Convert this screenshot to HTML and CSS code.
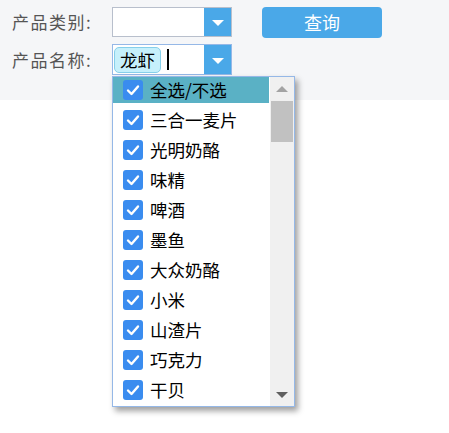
FILE: index.html
```html
<!DOCTYPE html>
<html lang="zh">
<head>
<meta charset="utf-8">
<title>产品查询</title>
<link rel="stylesheet" href="styles.css">
</head>
<body>
<div class="panel">
  <div class="row">
    <label class="label">产品类别:</label>
    <div class="combo">
      <div class="combo-text"></div>
      <div class="combo-arrow"><span class="tri-down"></span></div>
    </div>
    <button class="btn">查询</button>
  </div>
  <div class="row row2">
    <label class="label">产品名称:</label>
    <div class="combo combo-focus">
      <div class="combo-text">
        <span class="tag">龙虾</span>
        <span class="caret"></span>
      </div>
      <div class="combo-arrow"><span class="tri-down"></span></div>
    </div>
  </div>
</div>

<div class="dropdown">
  <ul class="list">
    <li class="item selected"><span class="cb"><svg viewBox="0 0 20 20" width="20" height="20"><polyline points="5,10.5 8.5,14 15,6.5" fill="none" stroke="#fff" stroke-width="2.4" stroke-linecap="round" stroke-linejoin="round"/></svg></span>全选/不选</li>
    <li class="item"><span class="cb"><svg viewBox="0 0 20 20" width="20" height="20"><polyline points="5,10.5 8.5,14 15,6.5" fill="none" stroke="#fff" stroke-width="2.4" stroke-linecap="round" stroke-linejoin="round"/></svg></span>三合一麦片</li>
    <li class="item"><span class="cb"><svg viewBox="0 0 20 20" width="20" height="20"><polyline points="5,10.5 8.5,14 15,6.5" fill="none" stroke="#fff" stroke-width="2.4" stroke-linecap="round" stroke-linejoin="round"/></svg></span>光明奶酪</li>
    <li class="item"><span class="cb"><svg viewBox="0 0 20 20" width="20" height="20"><polyline points="5,10.5 8.5,14 15,6.5" fill="none" stroke="#fff" stroke-width="2.4" stroke-linecap="round" stroke-linejoin="round"/></svg></span>味精</li>
    <li class="item"><span class="cb"><svg viewBox="0 0 20 20" width="20" height="20"><polyline points="5,10.5 8.5,14 15,6.5" fill="none" stroke="#fff" stroke-width="2.4" stroke-linecap="round" stroke-linejoin="round"/></svg></span>啤酒</li>
    <li class="item"><span class="cb"><svg viewBox="0 0 20 20" width="20" height="20"><polyline points="5,10.5 8.5,14 15,6.5" fill="none" stroke="#fff" stroke-width="2.4" stroke-linecap="round" stroke-linejoin="round"/></svg></span>墨鱼</li>
    <li class="item"><span class="cb"><svg viewBox="0 0 20 20" width="20" height="20"><polyline points="5,10.5 8.5,14 15,6.5" fill="none" stroke="#fff" stroke-width="2.4" stroke-linecap="round" stroke-linejoin="round"/></svg></span>大众奶酪</li>
    <li class="item"><span class="cb"><svg viewBox="0 0 20 20" width="20" height="20"><polyline points="5,10.5 8.5,14 15,6.5" fill="none" stroke="#fff" stroke-width="2.4" stroke-linecap="round" stroke-linejoin="round"/></svg></span>小米</li>
    <li class="item"><span class="cb"><svg viewBox="0 0 20 20" width="20" height="20"><polyline points="5,10.5 8.5,14 15,6.5" fill="none" stroke="#fff" stroke-width="2.4" stroke-linecap="round" stroke-linejoin="round"/></svg></span>山渣片</li>
    <li class="item"><span class="cb"><svg viewBox="0 0 20 20" width="20" height="20"><polyline points="5,10.5 8.5,14 15,6.5" fill="none" stroke="#fff" stroke-width="2.4" stroke-linecap="round" stroke-linejoin="round"/></svg></span>巧克力</li>
    <li class="item"><span class="cb"><svg viewBox="0 0 20 20" width="20" height="20"><polyline points="5,10.5 8.5,14 15,6.5" fill="none" stroke="#fff" stroke-width="2.4" stroke-linecap="round" stroke-linejoin="round"/></svg></span>干贝</li>
  </ul>
  <div class="scrollbar">
    <div class="sb-btn"><span class="tri-up"></span></div>
    <div class="sb-thumb"></div>
    <div class="sb-track"></div>
    <div class="sb-btn"><span class="tri-down dark"></span></div>
  </div>
</div>
</body>
</html>
```

FILE: styles.css
```css
* { box-sizing: border-box; }
html, body {
  margin: 0;
  padding: 0;
  background: #ffffff;
  font-family: "Noto Sans CJK SC", "Noto Sans", sans-serif;
}
.panel {
  background: #f5f6f8;
  height: 100px;
  padding: 7px 0 0 12px;
  display: flex;
  flex-direction: column;
  gap: 7px;
}
.row {
  display: flex;
  align-items: center;
  height: 30px;
}
.row2 { height: 31px; }
.label {
  width: 100px;
  font-size: 17px;
  letter-spacing: 1.5px;
  color: #555;
  line-height: 30px;
}
.combo {
  width: 120px;
  height: 100%;
  border: 1px solid #b8bfcc;
  background: #fff;
  display: flex;
}
.combo-focus { border-color: #95b8e7; }
.combo-text {
  flex: 1;
  display: flex;
  align-items: center;
  padding-left: 1px;
  gap: 6px;
}
.combo-arrow {
  width: 27px;
  background: #4aa8e8;
  display: flex;
  align-items: center;
  justify-content: center;
}
.tri-down {
  width: 0;
  height: 0;
  border-left: 6px solid transparent;
  border-right: 6px solid transparent;
  border-top: 6px solid #fff;
  margin-top: 2px;
}
.tri-down.dark { border-top-color: #606060; }
.tri-up {
  width: 0;
  height: 0;
  border-left: 6px solid transparent;
  border-right: 6px solid transparent;
  border-bottom: 6px solid #a3a3a3;
}
.tag {
  height: 26px;
  padding: 0 5px;
  background: #c6f0fb;
  border: 1px solid #86cfea;
  border-radius: 5px;
  font-size: 17.5px;
  line-height: 23px;
  color: #000;
}
.caret {
  width: 2px;
  height: 21px;
  background: #000;
}
.btn {
  margin-left: 30px;
  width: 120px;
  height: 31px;
  border: none;
  border-radius: 4px;
  background: #4aa8e8;
  color: #fff;
  font-family: "Noto Sans CJK SC", "Noto Sans", sans-serif;
  font-size: 18px;
  padding: 0;
  line-height: 30px;
}
.dropdown {
  position: absolute;
  left: 112px;
  top: 76px;
  width: 183px;
  height: 331px;
  border: 1px solid #95b8e7;
  background: #fff;
  box-shadow: 3px 4px 6px rgba(0, 0, 0, 0.38);
  display: flex;
  overflow: hidden;
}
.list {
  list-style: none;
  margin: 0;
  padding: 0;
  width: 157px;
  overflow: hidden;
}
.item {
  height: 26px;
  margin-bottom: 4px;
  width: 156px;
  display: flex;
  align-items: center;
  padding-left: 10px;
  font-size: 17.5px;
  line-height: 24px;
  color: #000;
  white-space: nowrap;
}
.item.selected { background: #5ab1c5; }
.cb {
  width: 20px;
  height: 20px;
  border-radius: 3px;
  background: #3a8cef;
  margin-right: 7px;
  flex: none;
  display: flex;
}
.scrollbar {
  width: 24px;
  background: #f0f0f0;
  display: flex;
  flex-direction: column;
}
.sb-btn {
  height: 24px;
  display: flex;
  align-items: center;
  justify-content: center;
  flex: none;
}
.sb-thumb {
  height: 41px;
  margin: 0 1px 0 1px;
  background: #c1c1c1;
  flex: none;
}
.sb-track { flex: 1; }
```
